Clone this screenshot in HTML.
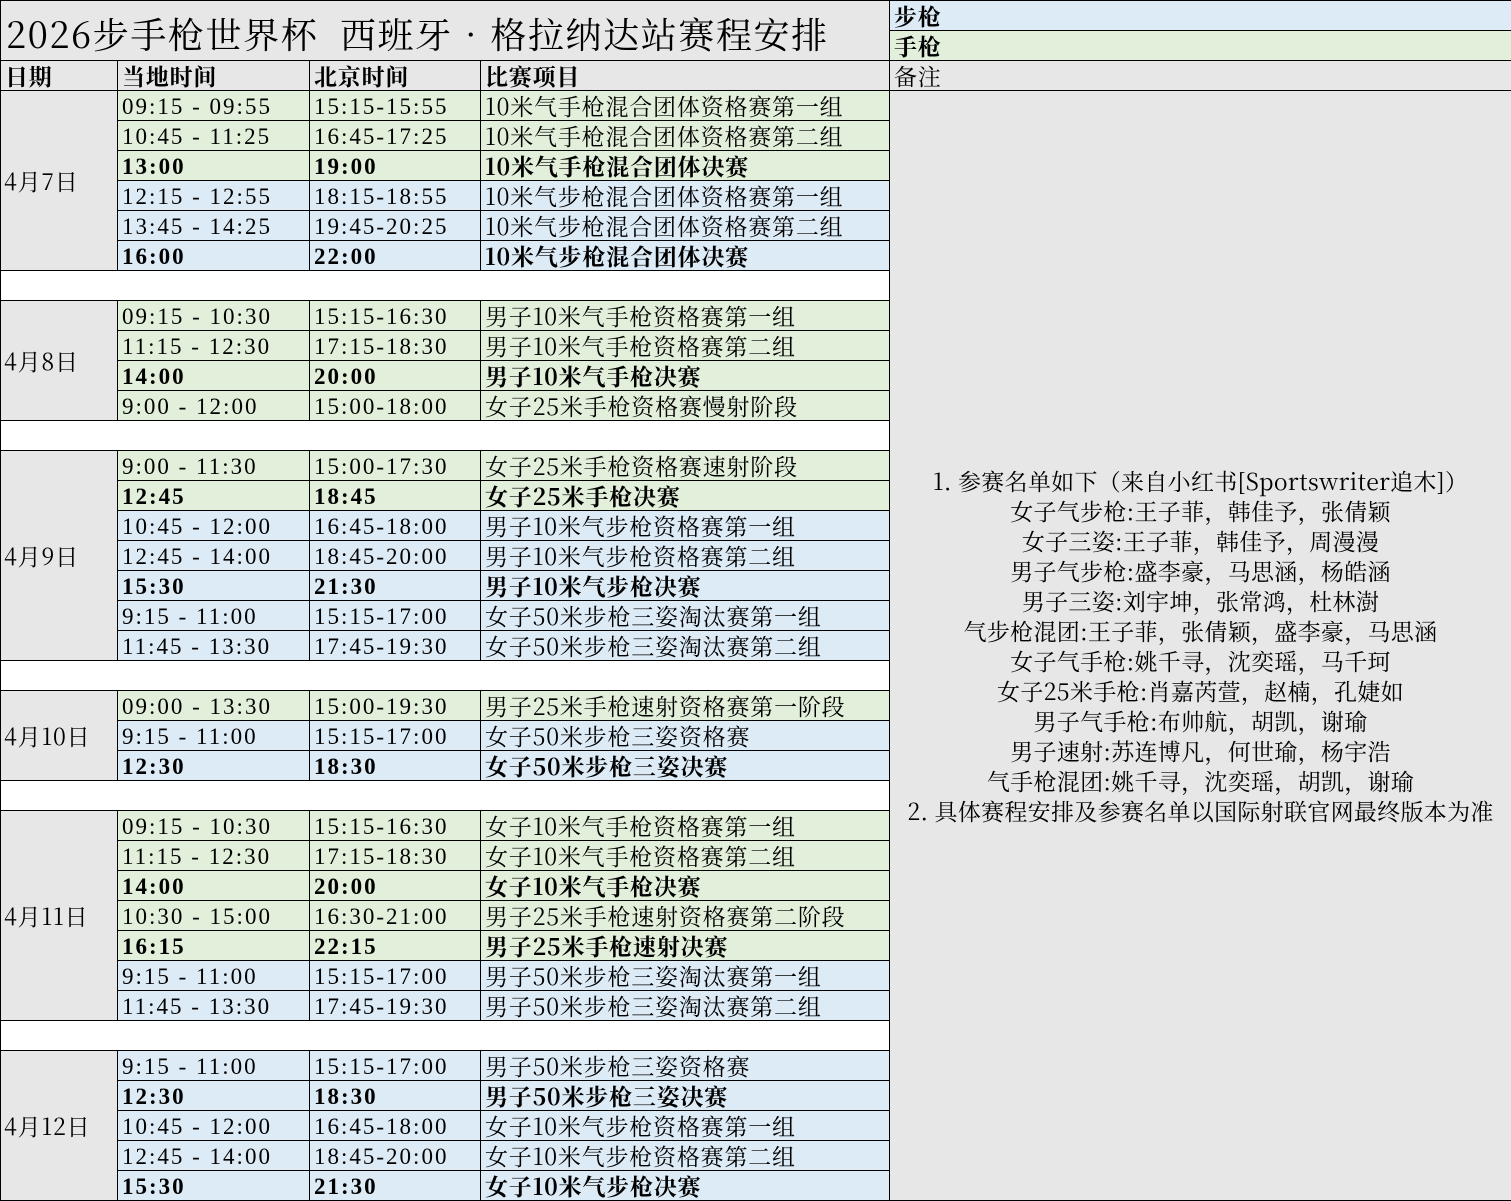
<!DOCTYPE html>
<html><head><meta charset="utf-8">
<style>
html,body{margin:0;padding:0;background:#fff;}
body{width:1511px;height:1201px;overflow:hidden;}
table{border-collapse:collapse;table-layout:fixed;width:1511px;font-family:"Noto Serif CJK SC","Liberation Serif",serif;font-size:23px;color:#000;}
td{border:1px solid #000;height:29px;padding:0 0 0 4px;line-height:28px;white-space:nowrap;overflow:hidden;vertical-align:bottom;letter-spacing:0.8px;}
.t{font-family:"Liberation Serif","Noto Serif CJK SC",serif;font-size:23px;letter-spacing:2px;white-space:pre;line-height:26px;}
.g{background:#e2efda;}
.b{background:#ddebf7;}
.y{background:#e7e7e7;}
.w{background:#fff;}
.B td{font-weight:bold;}
.d{background:#e7e7e7;vertical-align:middle;padding-left:3px;}
.title{font-size:36px;background:#e7e7e7;vertical-align:bottom;padding-left:5px;padding-bottom:6px;line-height:40px;letter-spacing:1.6px;}
.rem{background:#e7e7e7;text-align:center;vertical-align:middle;white-space:pre;line-height:30px;font-size:23px;letter-spacing:0.3px;padding:0 4px 0 4px;}
</style></head><body>
<table>
<colgroup><col style="width:117px"><col style="width:192px"><col style="width:171px"><col style="width:409px"><col style="width:622px"></colgroup>
<tr><td class="title" colspan="4" rowspan="2">2026步手枪世界杯&nbsp; 西班牙•格拉纳达站赛程安排</td><td class="b" style="font-weight:bold">步枪</td></tr>
<tr><td class="g" style="font-weight:bold">手枪</td></tr>
<tr class="y"><td class="y" style="font-weight:bold">日期</td><td class="y" style="font-weight:bold">当地时间</td><td class="y" style="font-weight:bold">北京时间</td><td class="y" style="font-weight:bold">比赛项目</td><td class="y">备注</td></tr>

<tr><td class="d" rowspan="6">4月7日</td><td class="g t">09:15 - 09:55</td><td class="g t">15:15-15:55</td><td class="g">10米气手枪混合团体资格赛第一组</td>
<td class="rem" rowspan="37">1. 参赛名单如下（来自小红书[Sportswriter追木]）
女子气步枪:王子菲，韩佳予，张倩颖
女子三姿:王子菲，韩佳予，周漫漫
男子气步枪:盛李豪，马思涵，杨皓涵
男子三姿:刘宇坤，张常鸿，杜林澍
气步枪混团:王子菲，张倩颖，盛李豪，马思涵
女子气手枪:姚千寻，沈奕瑶，马千珂
女子25米手枪:肖嘉芮萱，赵楠，孔婕如
男子气手枪:布帅航，胡凯，谢瑜
男子速射:苏连博凡，何世瑜，杨宇浩
气手枪混团:姚千寻，沈奕瑶，胡凯，谢瑜
2. 具体赛程安排及参赛名单以国际射联官网最终版本为准</td></tr>
<tr><td class="g t">10:45 - 11:25</td><td class="g t">16:45-17:25</td><td class="g">10米气手枪混合团体资格赛第二组</td></tr>
<tr class="B"><td class="g t">13:00</td><td class="g t">19:00</td><td class="g">10米气手枪混合团体决赛</td></tr>
<tr><td class="b t">12:15 - 12:55</td><td class="b t">18:15-18:55</td><td class="b">10米气步枪混合团体资格赛第一组</td></tr>
<tr><td class="b t">13:45 - 14:25</td><td class="b t">19:45-20:25</td><td class="b">10米气步枪混合团体资格赛第二组</td></tr>
<tr class="B"><td class="b t">16:00</td><td class="b t">22:00</td><td class="b">10米气步枪混合团体决赛</td></tr>
<tr><td class="w" colspan="4"></td></tr>

<tr><td class="d" rowspan="4">4月8日</td><td class="g t">09:15 - 10:30</td><td class="g t">15:15-16:30</td><td class="g">男子10米气手枪资格赛第一组</td></tr>
<tr><td class="g t">11:15 - 12:30</td><td class="g t">17:15-18:30</td><td class="g">男子10米气手枪资格赛第二组</td></tr>
<tr class="B"><td class="g t">14:00</td><td class="g t">20:00</td><td class="g">男子10米气手枪决赛</td></tr>
<tr><td class="g t">9:00 - 12:00</td><td class="g t">15:00-18:00</td><td class="g">女子25米手枪资格赛慢射阶段</td></tr>
<tr><td class="w" colspan="4"></td></tr>

<tr><td class="d" rowspan="7">4月9日</td><td class="g t">9:00 - 11:30</td><td class="g t">15:00-17:30</td><td class="g">女子25米手枪资格赛速射阶段</td></tr>
<tr class="B"><td class="g t">12:45</td><td class="g t">18:45</td><td class="g">女子25米手枪决赛</td></tr>
<tr><td class="b t">10:45 - 12:00</td><td class="b t">16:45-18:00</td><td class="b">男子10米气步枪资格赛第一组</td></tr>
<tr><td class="b t">12:45 - 14:00</td><td class="b t">18:45-20:00</td><td class="b">男子10米气步枪资格赛第二组</td></tr>
<tr class="B"><td class="b t">15:30</td><td class="b t">21:30</td><td class="b">男子10米气步枪决赛</td></tr>
<tr><td class="b t">9:15 - 11:00</td><td class="b t">15:15-17:00</td><td class="b">女子50米步枪三姿淘汰赛第一组</td></tr>
<tr><td class="b t">11:45 - 13:30</td><td class="b t">17:45-19:30</td><td class="b">女子50米步枪三姿淘汰赛第二组</td></tr>
<tr><td class="w" colspan="4"></td></tr>

<tr><td class="d" rowspan="3">4月10日</td><td class="g t">09:00 - 13:30</td><td class="g t">15:00-19:30</td><td class="g">男子25米手枪速射资格赛第一阶段</td></tr>
<tr><td class="b t">9:15 - 11:00</td><td class="b t">15:15-17:00</td><td class="b">女子50米步枪三姿资格赛</td></tr>
<tr class="B"><td class="b t">12:30</td><td class="b t">18:30</td><td class="b">女子50米步枪三姿决赛</td></tr>
<tr><td class="w" colspan="4"></td></tr>

<tr><td class="d" rowspan="7">4月11日</td><td class="g t">09:15 - 10:30</td><td class="g t">15:15-16:30</td><td class="g">女子10米气手枪资格赛第一组</td></tr>
<tr><td class="g t">11:15 - 12:30</td><td class="g t">17:15-18:30</td><td class="g">女子10米气手枪资格赛第二组</td></tr>
<tr class="B"><td class="g t">14:00</td><td class="g t">20:00</td><td class="g">女子10米气手枪决赛</td></tr>
<tr><td class="g t">10:30 - 15:00</td><td class="g t">16:30-21:00</td><td class="g">男子25米手枪速射资格赛第二阶段</td></tr>
<tr class="B"><td class="g t">16:15</td><td class="g t">22:15</td><td class="g">男子25米手枪速射决赛</td></tr>
<tr><td class="b t">9:15 - 11:00</td><td class="b t">15:15-17:00</td><td class="b">男子50米步枪三姿淘汰赛第一组</td></tr>
<tr><td class="b t">11:45 - 13:30</td><td class="b t">17:45-19:30</td><td class="b">男子50米步枪三姿淘汰赛第二组</td></tr>
<tr><td class="w" colspan="4"></td></tr>

<tr><td class="d" rowspan="5">4月12日</td><td class="b t">9:15 - 11:00</td><td class="b t">15:15-17:00</td><td class="b">男子50米步枪三姿资格赛</td></tr>
<tr class="B"><td class="b t">12:30</td><td class="b t">18:30</td><td class="b">男子50米步枪三姿决赛</td></tr>
<tr><td class="b t">10:45 - 12:00</td><td class="b t">16:45-18:00</td><td class="b">女子10米气步枪资格赛第一组</td></tr>
<tr><td class="b t">12:45 - 14:00</td><td class="b t">18:45-20:00</td><td class="b">女子10米气步枪资格赛第二组</td></tr>
<tr class="B"><td class="b t">15:30</td><td class="b t">21:30</td><td class="b">女子10米气步枪决赛</td></tr>
</table>
</body></html>
